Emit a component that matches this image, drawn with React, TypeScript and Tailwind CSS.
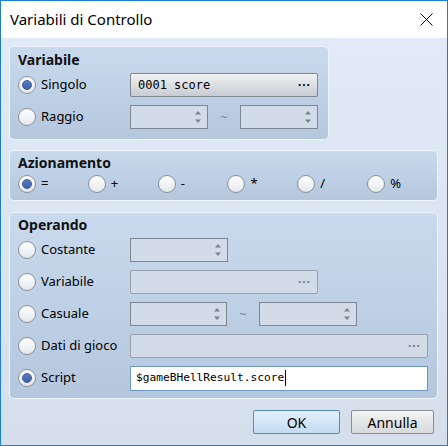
import React from "react";

const ops = ["=", "+", "-", "*", "/", "%"];

function Radio({ on }: { on?: boolean }) {
  return (
    <span className="flex h-[18px] w-[18px] shrink-0 items-center justify-center rounded-full border border-[#8b9097] bg-gradient-to-b from-white to-[#e4e8ee]">
      {on && (
        <span className="h-[10px] w-[10px] rounded-full border border-[#3a5a9e] bg-gradient-to-b from-[#5a7cc2] to-[#3e5fa8]" />
      )}
    </span>
  );
}

function Spinner({ w }: { w: string }) {
  return (
    <div className={`flex h-[24px] ${w} items-center justify-end border border-[#7e8892] bg-[#d2dce8] pr-[5px]`}>
      <svg width="8" height="16" viewBox="0 0 8 16">
        <path d="M1 5.5 L4 2 L7 5.5 Z" fill="#7b828a" />
        <path d="M1 10.5 L4 14 L7 10.5 Z" fill="#7b828a" />
      </svg>
    </div>
  );
}

function Tilde() {
  return (
    <span className="flex w-[32px] justify-center text-[13px] leading-none text-[#7b8591]">~</span>
  );
}

function Pick({ w, text, off }: { w: string; text?: string; off?: boolean }) {
  return (
    <div
      className={`flex h-[24px] ${w} items-center justify-between rounded-[2px] border pl-[7px] pr-[6px] ${
        off
          ? "border-[#98a2ad] bg-[#d2dce8] text-[#6f7882]"
          : "border-[#7f8790] bg-gradient-to-b from-[#f1f2f4] to-[#c8ccd2] text-black"
      }`}
    >
      <span className="font-['DejaVu_Sans_Mono',monospace] text-[12px]">{text}</span>
      <span className="text-[12px] font-bold leading-none tracking-[1px]">···</span>
    </div>
  );
}

function Row({ label, on, children }: { label: string; on?: boolean; children?: React.ReactNode }) {
  return (
    <div className="flex h-[24px] items-center">
      <div className="flex w-[112px] items-center gap-[5px]">
        <Radio on={on} />
        <span className="text-[13px] text-black">{label}</span>
      </div>
      {children}
    </div>
  );
}

function Title({ children }: { children: React.ReactNode }) {
  return <div className="text-[14px] font-bold leading-[20px] text-[#111]">{children}</div>;
}

const panel =
  "rounded-[5px] border border-[#eef4fb] bg-gradient-to-b from-[#c9daee] to-[#b4c7dd] pl-[8px]";

export default function App() {
  return (
    <div className="flex h-[446px] w-[448px] flex-col border border-[#1a7fd4] bg-gradient-to-b from-[#e2ecf9] to-[#d5dfec] font-['Noto_Sans',sans-serif]">
      <div className="flex h-[37px] shrink-0 items-center justify-between bg-white pl-[9px] pr-[14px]">
        <span className="text-[15px] text-black">Variabili di Controllo</span>
        <svg width="13" height="13" viewBox="0 0 13 13">
          <path d="M0.5 0.5 L12.5 12.5 M12.5 0.5 L0.5 12.5" stroke="#000" strokeWidth="1" />
        </svg>
      </div>

      <div className="flex flex-col pl-[8px] pt-[8px]">
        <div className={`${panel} w-[320px] pb-[10px] pt-[3px]`}>
          <Title>Variabile</Title>
          <div className="mt-[3px] flex flex-col gap-[8px]">
            <Row label="Singolo" on>
              <Pick w="w-[188px]" text="0001 score" />
            </Row>
            <Row label="Raggio">
              <Spinner w="w-[78px]" />
              <Tilde />
              <Spinner w="w-[78px]" />
            </Row>
          </div>
        </div>

        <div className={`${panel} mt-[10px] w-[429px] pb-[7px] pt-[2px]`}>
          <Title>Azionamento</Title>
          <div className="mt-[2px] flex">
            {ops.map((o, i) => (
              <div key={o} className="flex h-[18px] w-[70px] items-center gap-[5px]">
                <Radio on={i === 0} />
                <span className="text-[13px] text-black">{o}</span>
              </div>
            ))}
          </div>
        </div>

        <div className={`${panel} mt-[11px] w-[429px] pb-[8px] pt-[2px]`}>
          <Title>Operando</Title>
          <div className="mt-[3px] flex flex-col gap-[8px]">
            <Row label="Costante">
              <Spinner w="w-[98px]" />
            </Row>
            <Row label="Variabile">
              <Pick w="w-[188px]" off />
            </Row>
            <Row label="Casuale">
              <Spinner w="w-[97px]" />
              <Tilde />
              <Spinner w="w-[98px]" />
            </Row>
            <Row label="Dati di gioco">
              <Pick w="w-[298px]" off />
            </Row>
            <Row label="Script" on>
              <div className="flex h-[25px] w-[298px] items-center border border-[#6f96c4] bg-white pl-[5px]">
                <span className="font-['DejaVu_Sans_Mono',monospace] text-[11.2px] text-black">
                  $gameBHellResult.score
                </span>
                <span className="ml-[1px] h-[16px] w-px bg-black" />
              </div>
            </Row>
          </div>
        </div>
      </div>

      <div className="mt-[11px] flex justify-end gap-[11px] pr-[13px]">
        <button className="h-[24px] w-[87px] rounded-[2px] border border-[#5a8bc0] bg-gradient-to-b from-[#e4f0fc] to-[#c3dbf2] text-[14px] text-black">
          OK
        </button>
        <button className="h-[24px] w-[83px] rounded-[2px] border border-[#8a8d92] bg-gradient-to-b from-[#f3f3f3] to-[#d8d9db] text-[14px] text-black">
          Annulla
        </button>
      </div>
    </div>
  );
}
